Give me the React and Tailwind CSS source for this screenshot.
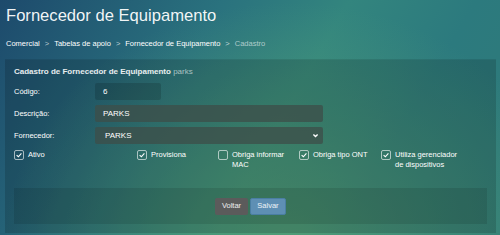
import React from 'react';

const checks = [
  { label: 'Ativo', checked: true, w: 'w-[123px]' },
  { label: 'Provisiona', checked: true, w: 'w-[81px]' },
  { label: 'Obriga informar MAC', checked: false, w: 'w-[81px]' },
  { label: 'Obriga tipo ONT', checked: true, w: 'w-[82px]' },
  { label: 'Utiliza gerenciador de dispositivos', checked: true, w: 'w-[90px]' },
];

const CheckBox = ({ checked }) => (
  <span className="flex h-[10px] w-[10px] shrink-0 items-center justify-center rounded-[2px] border border-white/60">
    {checked && (
      <svg viewBox="0 0 10 10" className="h-[8px] w-[8px]" fill="none" stroke="white" strokeWidth="1.4">
        <path d="M2 5.2 L4.2 7.2 L8 3" />
      </svg>
    )}
  </span>
);

export default function App() {
  return (
    <div
      className="h-[235px] w-[500px] overflow-hidden bg-[linear-gradient(120deg,#1d4a6c_0%,#2a727e_35%,#33857e_55%,#2c7a7e_75%,#2f7a78_100%)] text-white"
      style={{ fontFamily: '"Liberation Sans", Arial, sans-serif' }}
    >
      <div className="h-full w-full bg-[radial-gradient(ellipse_at_58%_105%,rgba(95,170,115,0.7),transparent_70%)]">
        <div className="px-[6px] pt-[5px]">
          <h1 className="text-[16.6px] leading-[22px] text-white/95">Fornecedor de Equipamento</h1>
          <div className="mt-[12px] flex items-center gap-[5px] text-[7.5px] leading-[10px]">
            <span>Comercial</span>
            <span className="text-white/70">&gt;</span>
            <span>Tabelas de apoio</span>
            <span className="text-white/70">&gt;</span>
            <span>Fornecedor de Equipamento</span>
            <span className="text-white/70">&gt;</span>
            <span className="text-white/60">Cadastro</span>
          </div>
        </div>

        <div className="mx-[5px] mt-[11px] h-[173px] w-[491px] bg-black/15 px-[9px] pt-[7px] shadow-[0_-1px_0_rgba(0,0,0,0.1)]">
          <div className="text-[8px] leading-[10px]">
            <span className="font-bold text-white/90">Cadastro de Fornecedor de Equipamento</span>{' '}
            <span className="text-white/60">parks</span>
          </div>

          <div className="mt-[6px] flex flex-col gap-[5px] text-[7.5px]">
            <div className="flex items-center">
              <label className="w-[81px]">Código:</label>
              <div className="flex h-[17px] w-[66px] items-center rounded-[2px] bg-black/15 px-[8px] text-[8px]">6</div>
            </div>
            <div className="flex items-center">
              <label className="w-[81px]">Descrição:</label>
              <div className="flex h-[17px] w-[228px] items-center rounded-[2px] bg-[#3e4e48]/75 px-[8px] text-[8px]">PARKS</div>
            </div>
            <div className="flex items-center">
              <label className="w-[81px]">Fornecedor:</label>
              <div className="flex h-[17px] w-[228px] items-center justify-between rounded-[2px] bg-[#3e4e48]/75 pl-[10px] pr-[4px] text-[8px]">
                <span>PARKS</span>
                <svg viewBox="0 0 10 10" className="h-[7px] w-[7px]" fill="none" stroke="white" strokeWidth="2">
                  <path d="M2 3.5 L5 6.5 L8 3.5" />
                </svg>
              </div>
            </div>
          </div>

          <div className="mt-[6px] flex items-start text-[7.5px] leading-[10px]">
            {checks.map((c) => (
              <div key={c.label} className={`${c.w} flex items-start gap-[4px] pr-[8px]`}>
                <CheckBox checked={c.checked} />
                <span>{c.label}</span>
              </div>
            ))}
          </div>

          <div className="mt-[18px] flex h-[36px] w-[473px] items-center justify-center gap-[2px] bg-black/10">
            <button className="h-[17px] w-[33px] rounded-[2px] bg-[#5b5b5b] text-[7.5px] text-white/90">Voltar</button>
            <button className="h-[17px] w-[36px] rounded-[2px] border border-[#4a7ea3] bg-[#5e8fb4] text-[7.5px] text-white/90">Salvar</button>
          </div>
        </div>
      </div>
    </div>
  );
}
